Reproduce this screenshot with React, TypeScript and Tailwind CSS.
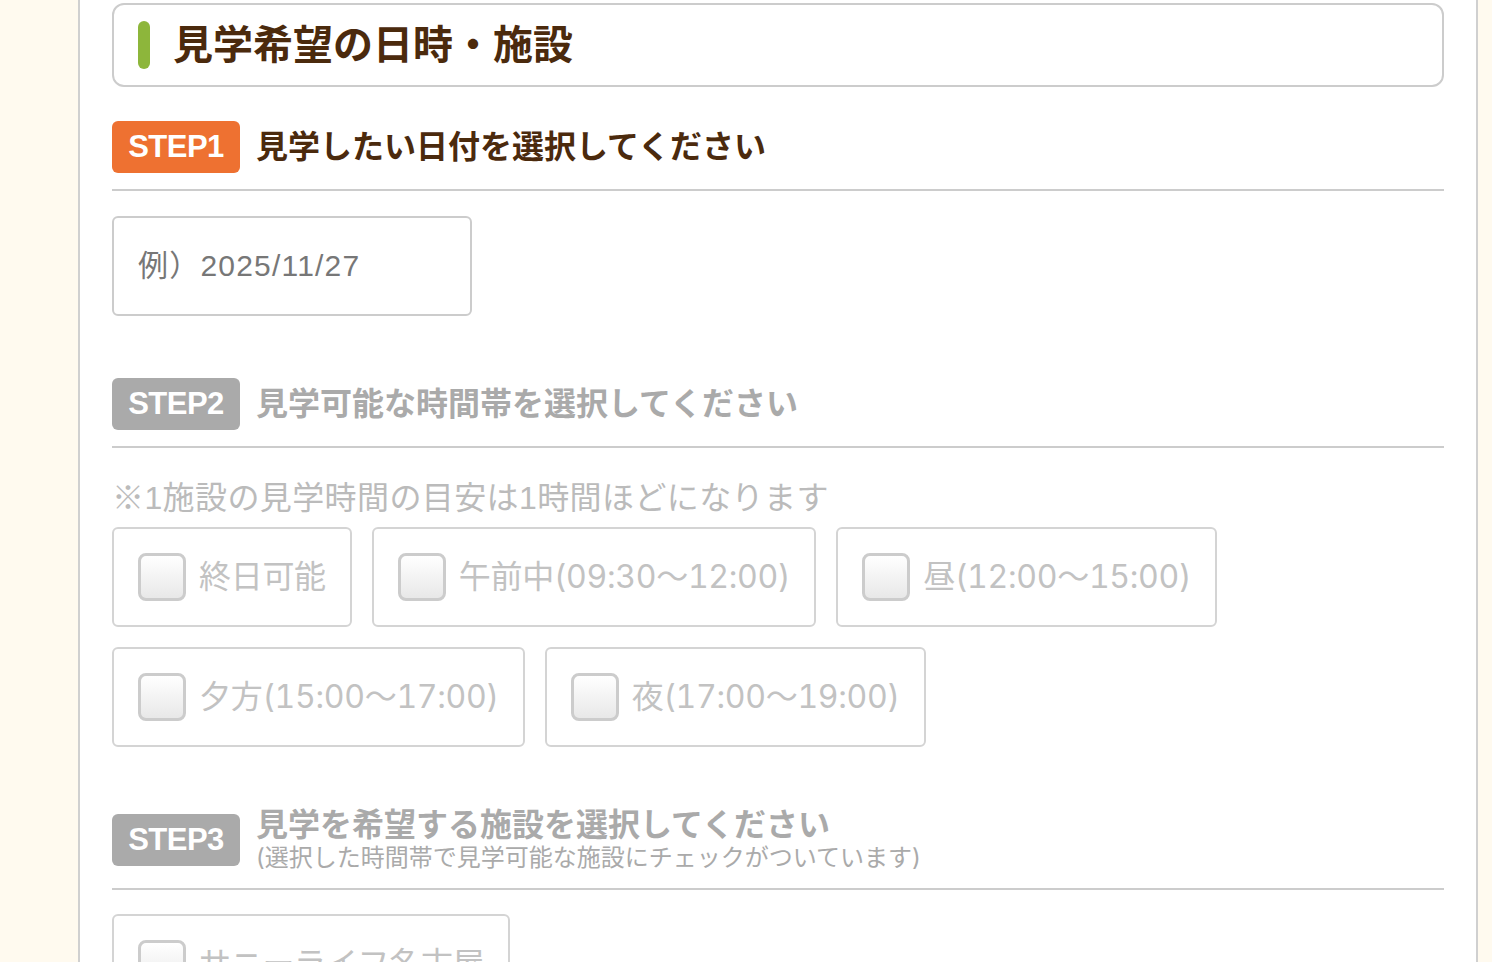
import React from 'react';

const jp = { fontFamily: '"Liberation Sans", "Noto Sans CJK JP", sans-serif' };
const wide = { fontFamily: 'Inter, "Noto Sans CJK JP", sans-serif' };

// Time-slot checkboxes (disabled look)
const timeSlots = [
  '終日可能',
  '午前中(09:30〜12:00)',
  '昼(12:00〜15:00)',
  '夕方(15:00〜17:00)',
  '夜(17:00〜19:00)',
];

const Checkbox = () => (
  <span className="w-[48px] h-[48px] rounded-lg border-[3px] border-[#cccccc] bg-gradient-to-b from-white to-[#e8e8e8] shrink-0"></span>
);

const OptionBox = ({ label }: { label: string }) => (
  <label className="flex items-center gap-[13px] border-2 border-[#d4d4d4] rounded-md p-6 bg-white">
    <Checkbox />
    <span className="text-[32px] leading-none text-[#c2c2c2] whitespace-nowrap tabular-nums tracking-[-0.3px]" style={wide}>
      {label}
    </span>
  </label>
);

const StepBadge = ({ num, active }: { num: number; active?: boolean }) => (
  <div
    className={`w-[128px] h-[52px] shrink-0 rounded-md flex items-center justify-center text-white font-bold text-[31px] tracking-[-0.5px] ${
      active ? 'bg-[#ee7131]' : 'bg-[#aaaaaa]'
    }`}
    style={{ fontFamily: '"Liberation Sans", sans-serif' }}
  >
    STEP{num}
  </div>
);

export default function App() {
  return (
    <div className="h-[962px] overflow-hidden bg-[#fffaef]" style={jp}>
      <div className="ml-[78px] w-[1400px] min-h-[962px] bg-white border-x-2 border-[#d0d0d0] px-8 pt-[3px]">
        {/* Section title */}
        <div className="h-[84px] border-2 border-[#cccccc] rounded-xl flex items-center pl-6">
          <span className="w-[12px] h-[48px] rounded-full bg-[#8db63b]"></span>
          <h2 className="ml-[23px] text-[40px] font-bold text-[#4b2a0d] leading-none">見学希望の日時・施設</h2>
        </div>

        {/* STEP1 */}
        <div className="mt-[34px] flex items-center gap-4 pb-4 border-b-2 border-[#cccccc]">
          <StepBadge num={1} active />
          <h3 className="text-[32px] font-bold text-[#4b2a0d] leading-none">見学したい日付を選択してください</h3>
        </div>
        <div className="mt-[25px] w-[360px] h-[100px] border-2 border-[#cccccc] rounded-md flex items-center pl-6">
          <span className="text-[30px] text-[#777777] leading-none tracking-[1.2px]">例）2025/11/27</span>
        </div>

        {/* STEP2 */}
        <div className="mt-[62px] flex items-center gap-4 pb-4 border-b-2 border-[#cccccc]">
          <StepBadge num={2} />
          <h3 className="text-[32px] font-bold text-[#aaaaaa] leading-none">見学可能な時間帯を選択してください</h3>
        </div>
        <p className="mt-[30px] mb-[9px] text-[32px] leading-[40px] text-[#bbbbbb] tracking-[0.4px]">
          ※1施設の見学時間の目安は1時間ほどになります
        </p>
        <div className="flex flex-wrap gap-5 w-[1340px]">
          {timeSlots.map((slot) => (
            <OptionBox key={slot} label={slot} />
          ))}
        </div>

        {/* STEP3 */}
        <div className="mt-[61px] flex items-center gap-4 pb-4 border-b-2 border-[#cccccc]">
          <StepBadge num={3} />
          <div>
            <h3 className="text-[32px] font-bold text-[#aaaaaa] leading-[35px]">見学を希望する施設を選択してください</h3>
            <p className="text-[24px] text-[#aaaaaa] leading-[29px]" style={wide}>
              (選択した時間帯で見学可能な施設にチェックがついています)
            </p>
          </div>
        </div>
        <div className="mt-[24px] flex">
          <OptionBox label="サニーライフ名古屋" />
        </div>
      </div>
    </div>
  );
}
